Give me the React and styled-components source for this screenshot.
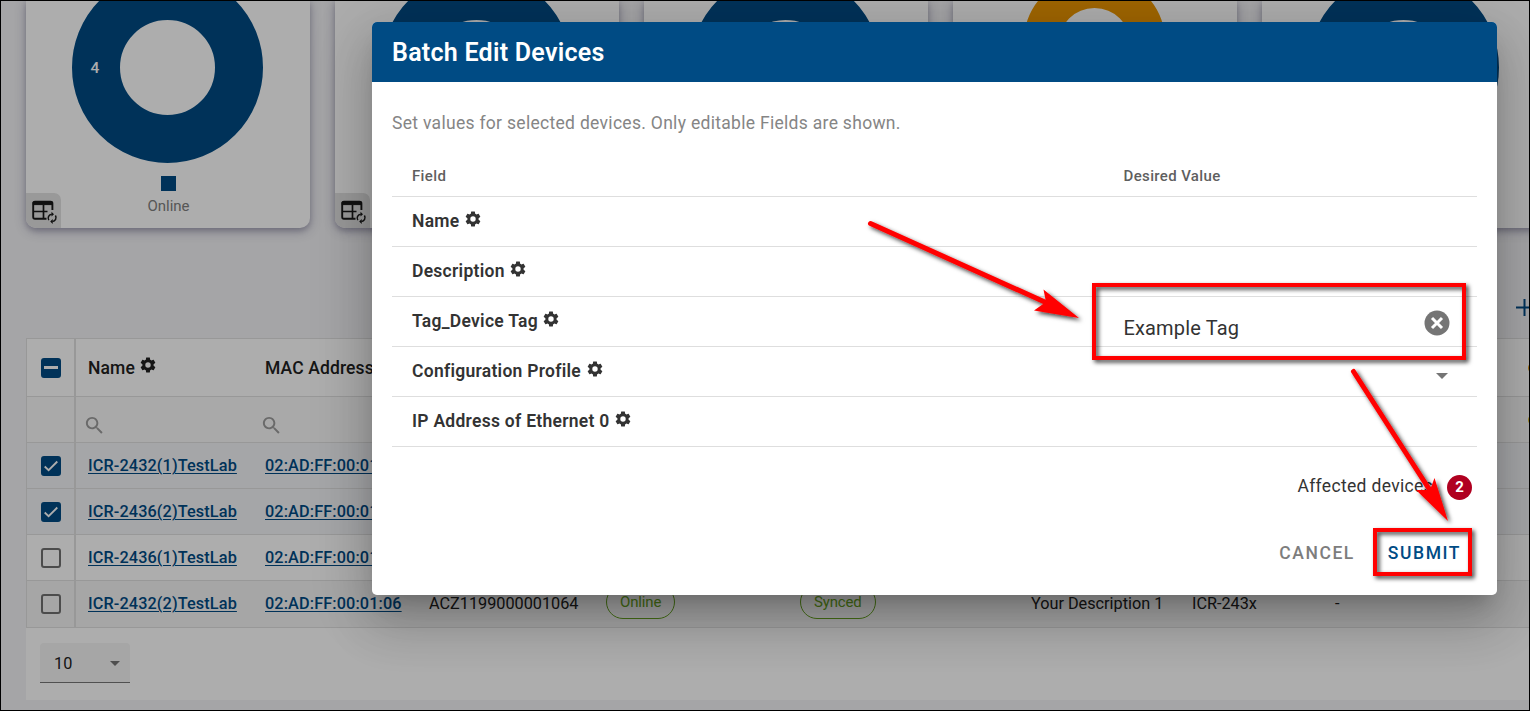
import React from "react";
import styled, { createGlobalStyle } from "styled-components";

const Global = createGlobalStyle`
  * { box-sizing: border-box; }
  body { margin: 0; overflow: hidden; font-family: Roboto, "Liberation Sans", sans-serif; }
`;

const blue = "#004b84";

const Page = styled.div`
  position: relative;
  width: 1530px;
  height: 711px;
  overflow: hidden;
  background: #f3f3f6;
  display: flex;
  flex-direction: column;
  padding-left: 26px;
  color: #212121;
`;

const Cards = styled.div`
  display: flex;
  gap: 25px;
  height: 228px;
  flex: none;
  width: 1520px;
`;

const Card = styled.section`
  position: relative;
  width: 284px;
  flex: none;
  height: 228px;
  background: #fff;
  border-radius: 0 0 10px 10px;
  box-shadow: 0 3px 12px rgba(40, 35, 80, 0.3), 0 3px 5px rgba(40, 35, 80, 0.18);
  display: flex;
  flex-direction: column;
`;

const Chart = styled.svg`
  display: block;
  flex: none;
`;

const Legend = styled.div`
  display: flex;
  flex-direction: column;
  align-items: center;
  margin-top: 6px;
  padding-left: 1px;
  gap: 6px;
  font-size: 15px;
  letter-spacing: -0.05px;
  line-height: 18px;
  color: #808080;
`;

const LegendSwatch = styled.span`
  width: 15px;
  height: 15px;
  background: ${blue};
`;

const CardAction = styled.button`
  position: absolute;
  left: 0;
  bottom: 0;
  width: 35px;
  height: 35px;
  border: 0;
  padding: 0;
  background: #e2e2e2;
  border-radius: 0 7px 0 10px;
`;

const Toolbar = styled.div`
  height: 110px;
  flex: none;
  display: flex;
  justify-content: flex-end;
  align-items: flex-end;
  padding: 0 0 22px;
  margin-right: -3px;
`;

const Panel = styled.main`
  flex: none;
  height: 362px;
  width: 1520px;
  background: #fff;
`;

const line = "#e0e0e0";

const Table = styled.div`
  border-left: 1px solid ${line};
  border-top: 1px solid ${line};
`;

const Row = styled.div`
  display: grid;
  grid-template-columns: 49px 177px 164px 177px 194px 231px 161px 143px 179px 30px;
  height: ${(p) => p.$h || 46}px;
  padding-bottom: ${(p) => (p.$last ? 1 : 0)}px;
  border-bottom: 1px solid ${line};
  background: ${(p) => p.$bg || "#fff"};
  align-items: stretch;
`;

const Cell = styled.div`
  display: flex;
  align-items: center;
  gap: 5px;
  padding-left: 12px;
  font-size: 16.25px;
  letter-spacing: -0.01px;
  white-space: nowrap;
`;

const CheckCell = styled(Cell)`
  justify-content: center;
  padding: 0;
  margin-bottom: ${(p) => (p.$last ? -1 : 0)}px;
  border-right: 2px solid ${line};
`;

const HeadCell = styled(Cell)`
  gap: 4px;
  font-size: 17.5px;
  font-weight: 500;
  letter-spacing: 0.12px;
`;

const FilterCell = styled(Cell)`
  padding: 12px 0 0 7px;
`;

const StatusCell = styled(Cell)`
  padding: 0 0 0 26px;
`;

const Link = styled.a`
  color: ${blue};
  font-weight: 500;
  letter-spacing: 0.12px;
  text-decoration: underline;
  text-underline-offset: 2px;
  text-decoration-thickness: 1px;
`;

const Chip = styled.span`
  height: 34px;
  margin-top: -3px;
  padding: 0 13px;
  border: 1px solid #67a321;
  border-radius: 17px;
  color: #67a321;
  font-size: 15px;
  letter-spacing: -0.15px;
  line-height: 32px;
`;

const Box = styled.span`
  display: flex;
  align-items: center;
  justify-content: center;
  width: 20px;
  height: 20px;
  border-radius: 3px;
  border: 2px solid ${(p) => (p.$on ? blue : "#717171")};
  background: ${(p) => (p.$on ? blue : "transparent")};
`;

const Status = styled.i`
  width: 12px;
  height: 12px;
  flex: none;
  border-radius: 6px;
  background: ${(p) => p.$color};
`;

const Pager = styled.div`
  padding: 15px 14px;
`;

const Select = styled.div`
  display: flex;
  align-items: center;
  justify-content: space-between;
  width: 90px;
  height: 40px;
  padding: 2px 10px 0 14px;
  background: #f5f5f5;
  border-bottom: 1px solid #777;
  border-radius: 4px 4px 0 0;
  font-size: 16.25px;
`;

const Scrim = styled.div`
  position: absolute;
  inset: 0;
  background: rgba(0, 0, 0, 0.32);
`;

const Dialog = styled.section`
  position: absolute;
  left: 372px;
  top: 22px;
  width: 1125px;
  height: 573px;
  background: #fff;
  border-radius: 5px;
  overflow: hidden;
`;

const DialogShadow = styled.div`
  position: absolute;
  left: 372px;
  top: 22px;
  width: 1125px;
  height: 573px;
  border-radius: 5px;
  box-shadow: 0 14px 19px -9px rgba(0, 0, 0, 0.2), 0 30px 48px 4px rgba(0, 0, 0, 0.14),
    0 11px 58px 10px rgba(0, 0, 0, 0.12);
`;

const DialogTitle = styled.h2`
  margin: 0;
  height: 60px;
  padding: 0 20px;
  background: ${blue};
  color: #fff;
  font-size: 25px;
  font-weight: 600;
  letter-spacing: 0.26px;
  line-height: 61px;
`;

const DialogBody = styled.div`
  padding: 28px 20px 0;
`;

const Intro = styled.p`
  margin: 0;
  height: 46px;
  font-size: 17.5px;
  line-height: 26px;
  letter-spacing: 0.3px;
  color: #858585;
`;

const Field = styled.div`
  display: grid;
  grid-template-columns: 711.5px 1fr;
  height: ${(p) => (p.$head ? 41 : 50)}px;
  border-bottom: 1px solid #dedede;
  padding: ${(p) => (p.$head ? "0 20px" : "0 20px 2px")};
  align-items: center;
  font-size: ${(p) => (p.$head ? 15 : 17.5)}px;
  font-weight: ${(p) => (p.$head ? 500 : 600)};
  letter-spacing: ${(p) => (p.$head ? 0.36 : 0.27)}px;
  color: ${(p) => (p.$head ? "#5f5f5f" : "#333")};
`;

const FieldName = styled.span`
  display: flex;
  align-items: center;
  gap: 4.5px;
`;

const FieldValue = styled.span`
  display: flex;
  align-items: center;
  justify-content: space-between;
  padding: ${(p) => (p.$select ? "11px 9px 0 0" : "5px 7px 0 0")};
  font-size: 20px;
  font-weight: 400;
  letter-spacing: 0.15px;
  color: #333;
`;

const Value = styled.span`
  padding-top: 9px;
`;

const Affected = styled.div`
  display: flex;
  justify-content: flex-end;
  align-items: center;
  gap: 14px;
  padding: 25px 5px 0 0;
  font-size: 17.5px;
  letter-spacing: 0.33px;
  line-height: 24px;
  color: #333;
`;

const Count = styled.span`
  width: 25px;
  height: 25px;
  margin-top: 3px;
  border-radius: 50%;
  background: #b00020;
  color: #fff;
  font-size: 15px;
  font-weight: 700;
  letter-spacing: 0;
  line-height: 25px;
  text-align: center;
`;

const Actions = styled.div`
  display: flex;
  justify-content: flex-end;
  gap: 33px;
  padding: 30px 16px 0 0;
`;

const Action = styled.button`
  border: 0;
  padding: 0;
  background: none;
  font: 500 17.5px/46px Roboto, sans-serif;
  letter-spacing: 1.56px;
  color: ${(p) => (p.$primary ? blue : "#7d7d7d")};
`;

const Marks = styled.svg`
  position: absolute;
  inset: 0;
  pointer-events: none;
`;

const Frame = styled.div`
  position: absolute;
  inset: 0;
  border: 1px solid #000;
`;

const GearIcon = styled.svg`
  flex: none;
  margin-top: -${(p) => p.$lift}px;
`;

const Gear = ({ size = 18, lift = 2 }) => (
  <GearIcon width={size} height={size} viewBox="0 0 24 24" fill="currentColor" $lift={lift}>
    <path
      fillRule="evenodd"
      d="M19.43 12.98c.04-.32.07-.64.07-.98s-.03-.66-.07-.98l2.11-1.65c.19-.15.24-.42.12-.64l-2-3.46c-.12-.22-.39-.3-.61-.22l-2.49 1c-.52-.4-1.08-.73-1.69-.98l-.38-2.65C14.46 2.18 14.25 2 14 2h-4c-.25 0-.46.18-.49.42l-.38 2.65c-.61.25-1.17.59-1.69.98l-2.49-1c-.23-.09-.49 0-.61.22l-2 3.46c-.13.22-.07.49.12.64l2.11 1.65c-.04.32-.07.65-.07.98s.03.66.07.98l-2.11 1.65c-.19.15-.24.42-.12.64l2 3.46c.12.22.39.3.61.22l2.49-1c.52.4 1.08.73 1.69.98l.38 2.65c.03.24.24.42.49.42h4c.25 0 .46-.18.49-.42l.38-2.65c.61-.25 1.17-.59 1.69-.98l2.49 1c.23.09.49 0 .61-.22l2-3.46c.12-.22.07-.49-.12-.64l-2.11-1.65zM12 15.600a3.600 3.600 0 1 1 0-7.200 3.600 3.600 0 0 1 0 7.200z"
    />
  </GearIcon>
);

const Search = () => (
  <svg width="23" height="23" viewBox="0 0 24 24" fill="#9c9c9c">
    <path d="M15.5 14h-.79l-.28-.27C15.41 12.59 16 11.11 16 9.5 16 5.91 13.09 3 9.5 3S3 5.91 3 9.5 5.91 16 9.5 16c1.61 0 3.09-.59 4.23-1.57l.27.28v.79l5 4.99L20.49 19l-4.99-5zm-6 0C7.01 14 5 11.99 5 9.5S7.01 5 9.5 5 14 7.01 14 9.5 11.99 14 9.5 14z" />
  </svg>
);

const Caret = ({ w = 12, color = "#757575" }) => (
  <svg width={w} height={w / 2} viewBox="0 0 12 6" fill={color}>
    <path d="M0 0h12L6 6z" />
  </svg>
);

const TableSync = () => (
  <svg width="35" height="35" viewBox="0 0 35 35" fill="none" stroke="#1a1a1a">
    <path d="M20.500 25.800H9q-1.800 0-1.800-1.800V10.400q0-1.800 1.800-1.800h15.600q1.800 0 1.800 1.800V17" strokeWidth="1.900" />
    <path d="M7.200 9h19.200v2.600H7.200z" fill="#1a1a1a" strokeWidth="1" />
    <path d="M7 18.500h14.500M17.500 12v13" strokeWidth="1.700" />
    <path d="M22.800 27.200a3.900 3.900 0 0 1 3-6M29.400 22.500a3.900 3.900 0 0 1-3 6" strokeWidth="1.500" />
    <path d="M25.500 18.800v4.800l2.500-2.400zM26.700 26.100v4.800l-2.500-2.400z" fill="#1a1a1a" stroke="none" />
  </svg>
);

const MixedMark = styled.span`
  flex: none;
  width: 14px;
  height: 3px;
  background: #fff;
`;

const Check = ({ state }) => (
  <Box $on={state !== "off"}>
    {state === "on" && (
      <svg width="16" height="16" viewBox="0 0 16 16" fill="none" stroke="#fff" strokeWidth="1.800">
        <path d="M1.700 8.500 5.600 12.200 14.300 3.500" />
      </svg>
    )}
    {state === "mixed" && <MixedMark />}
  </Box>
);

const charts = [
  { color: blue, r: 71.5, w: 48, cy: 67.5, label: "Online" },
  { color: blue, r: 71.5, w: 48, cy: 67.5 },
  { color: blue, r: 71.5, w: 48, cy: 67.5 },
  { color: "#eb9600", r: 53.5, w: 35, cy: 44 },
  { color: blue, r: 71.5, w: 48, cy: 67.5 },
];

const rows = [
  { name: "ICR-2432(1)TestLab", mac: "02:AD:FF:00:01:03", check: "on", bg: "#f4f5f8" },
  { name: "ICR-2436(2)TestLab", mac: "02:AD:FF:00:01:04", check: "on", bg: "#f4f5f8" },
  { name: "ICR-2436(1)TestLab", mac: "02:AD:FF:00:01:05", check: "off", bg: "#fff" },
  {
    name: "ICR-2432(2)TestLab",
    mac: "02:AD:FF:00:01:06",
    check: "off",
    bg: "#f5f5f5",
    more: true,
  },
];

const fields = [
  { name: "Name" },
  { name: "Description" },
  { name: "Tag_Device Tag", value: "Example Tag" },
  { name: "Configuration Profile", select: true },
  { name: "IP Address of Ethernet 0" },
];

export default function App() {
  return (
    <Page>
      <Global />
      <Cards>
        {charts.map((c, i) => (
          <Card key={i}>
            <Chart width="284" height="170" viewBox="0 0 284 170">
              <circle cx="141.500" cy={c.cy} r={c.r} fill="none" stroke={c.color} strokeWidth={c.w} />
              {c.label && (
                <text x="69" y="73" textAnchor="middle" fontSize="15.500" fontWeight="500" fill="#fff">
                  4
                </text>
              )}
            </Chart>
            {c.label && (
              <Legend>
                <LegendSwatch />
                {c.label}
              </Legend>
            )}
            <CardAction>
              <TableSync />
            </CardAction>
          </Card>
        ))}
      </Cards>
      <Toolbar>
        <svg width="17" height="17" viewBox="0 0 17 17" stroke={blue} strokeWidth="2">
          <path d="M0 8.500h17M8.500 0v17" />
        </svg>
      </Toolbar>
      <Panel>
        <Table>
          <Row $h={58}>
            <CheckCell>
              <Check state="mixed" />
            </CheckCell>
            <HeadCell>
              Name <Gear lift={5} />
            </HeadCell>
            <HeadCell>MAC Address</HeadCell>
            <Cell />
            <Cell />
            <Cell />
            <Cell />
            <Cell />
            <Cell />
            <StatusCell>
              <Status $color="#e8a010" />
            </StatusCell>
          </Row>
          <Row $bg="#fafafa">
            <CheckCell />
            <FilterCell>
              <Search />
            </FilterCell>
            <FilterCell>
              <Search />
            </FilterCell>
            <Cell />
            <Cell />
            <Cell />
            <Cell />
            <Cell />
            <Cell />
            <StatusCell>
              <Status $color="#e0c020" />
            </StatusCell>
          </Row>
          {rows.map((r) => (
            <Row key={r.name} $bg={r.bg} $h={r.more ? 47 : 46} $last={r.more}>
              <CheckCell $last={r.more}>
                <Check state={r.check} />
              </CheckCell>
              <Cell>
                <Link>{r.name}</Link>
              </Cell>
              <Cell>
                <Link>{r.mac}</Link>
              </Cell>
              {r.more && (
                <>
                  <Cell>ACZ1199000001064</Cell>
                  <Cell>
                    <Chip>Online</Chip>
                  </Cell>
                  <Cell>
                    <Chip>Synced</Chip>
                  </Cell>
                  <Cell>Your Description 1</Cell>
                  <Cell>ICR-243x</Cell>
                  <Cell>-</Cell>
                </>
              )}
            </Row>
          ))}
        </Table>
        <Pager>
          <Select>
            10 <Caret w={10} />
          </Select>
        </Pager>
      </Panel>

      <Scrim />
      <DialogShadow />
      <Dialog>
        <DialogTitle>Batch Edit Devices</DialogTitle>
        <DialogBody>
          <Intro>Set values for selected devices. Only editable Fields are shown.</Intro>
          <Field $head>
            <span>Field</span>
            <span>Desired Value</span>
          </Field>
          {fields.map((f) => (
            <Field key={f.name}>
              <FieldName>
                {f.name} <Gear lift={3} />
              </FieldName>
              {f.value && (
                <FieldValue>
                  <Value>{f.value}</Value>
                  <svg width="26" height="26" viewBox="0 0 26 26">
                    <circle cx="13" cy="13" r="12.500" fill="#757575" />
                    <path d="m8 8 10 10M18 8 8 18" stroke="#fff" strokeWidth="3" />
                  </svg>
                </FieldValue>
              )}
              {f.select && (
                <FieldValue $select>
                  <span />
                  <Caret />
                </FieldValue>
              )}
            </Field>
          ))}
          <Affected>
            Affected devices
            <Count>2</Count>
          </Affected>
          <Actions>
            <Action>CANCEL</Action>
            <Action $primary>SUBMIT</Action>
          </Actions>
        </DialogBody>
      </Dialog>

      <Marks width="1530" height="711" viewBox="0 0 1530 711">
        <defs>
          <filter id="drop" x="-20%" y="-20%" width="140%" height="150%">
            <feDropShadow dx="2.500" dy="2.500" stdDeviation="2.200" floodColor="#000" floodOpacity="0.75" />
          </filter>
        </defs>
        <g filter="url(#drop)" fill="none" stroke="#f00" strokeWidth="4">
          <rect x="1094" y="285" width="370" height="73" />
          <rect x="1375" y="530" width="95" height="44" />
        </g>
        <g filter="url(#drop)" stroke="#f00" strokeWidth="5" strokeLinecap="round" fill="#f00">
          <path d="M870.500 223.500 1047 303" />
          <path d="M1043.500 289.500 1079 318 1034 310.500 1046 302z" stroke="none" />
          <path d="M1353.500 371.500 1431 492" />
          <path d="M1434.500 478 1448 521 1416 490 1430 490z" stroke="none" />
        </g>
      </Marks>
      <Frame />
    </Page>
  );
}
